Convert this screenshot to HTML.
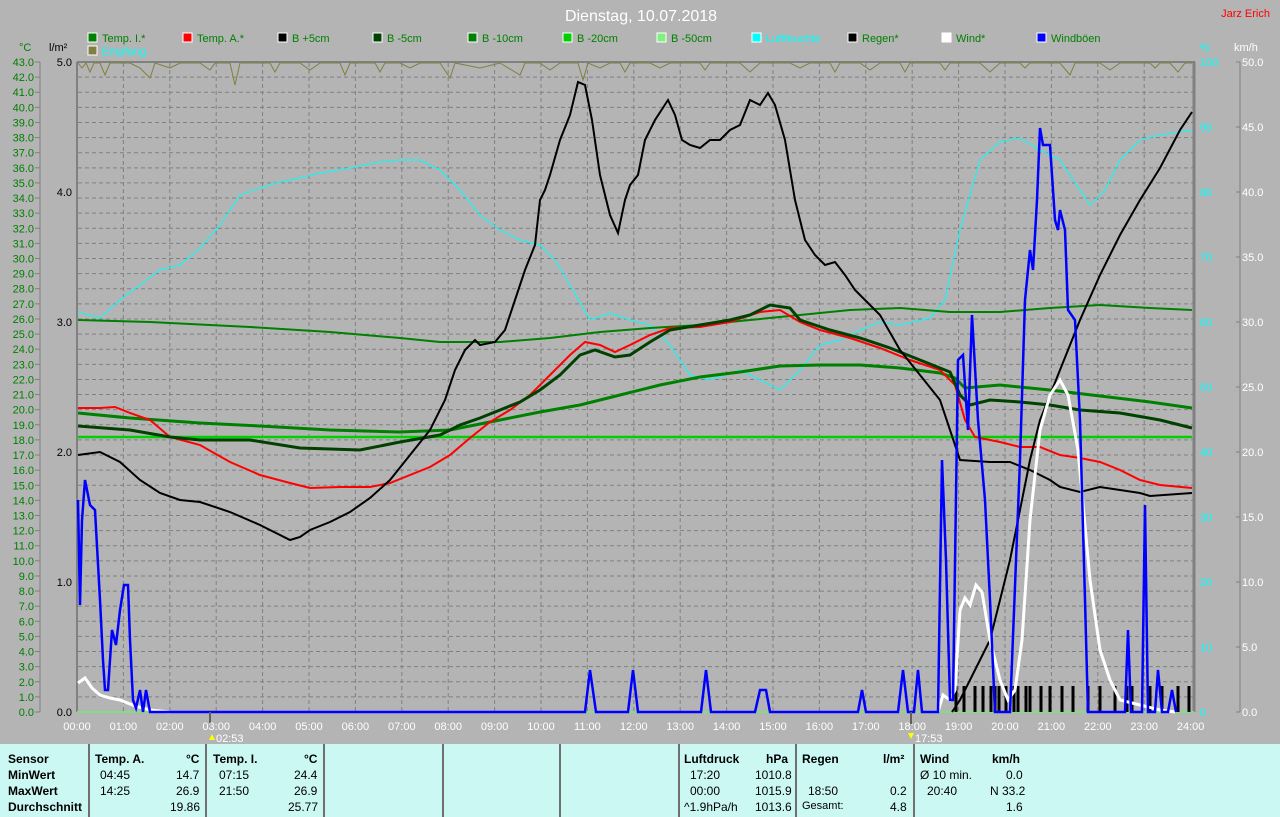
<!DOCTYPE html>
<html><head><meta charset="utf-8"><style>
body{margin:0;width:1280px;height:817px;overflow:hidden;background:#b4b4b4;font-family:"Liberation Sans",sans-serif}
svg{position:absolute;left:0;top:0}
.tb{position:absolute;left:0;top:744px;width:1280px;height:73px;background:#ccf8f4}
.c{position:absolute;font-size:12px;color:#000}
.b{font-weight:bold}
.v{position:absolute;top:0;width:2px;height:73px;background:#707070}
</style></head><body>
<svg width="1280" height="744" viewBox="0 0 1280 744" font-family="Liberation Sans, sans-serif">
<text x="641" y="21" fill="#fff" font-size="16" text-anchor="middle">Dienstag, 10.07.2018</text>
<text x="1270" y="17" fill="#f00" font-size="11" text-anchor="end">Jarz Erich</text>
<g font-size="11">
<rect x="88" y="33" width="9" height="9" fill="#008000" stroke="#fff"/><text x="102" y="42" fill="#008000">Temp. I.*</text>
<rect x="183" y="33" width="9" height="9" fill="#f00" stroke="#fff"/><text x="197" y="42" fill="#008000">Temp. A.*</text>
<rect x="278" y="33" width="9" height="9" fill="#000" stroke="#fff"/><text x="292" y="42" fill="#008000">B +5cm</text>
<rect x="373" y="33" width="9" height="9" fill="#004000" stroke="#fff"/><text x="387" y="42" fill="#008000">B -5cm</text>
<rect x="468" y="33" width="9" height="9" fill="#008000" stroke="#fff"/><text x="482" y="42" fill="#008000">B -10cm</text>
<rect x="563" y="33" width="9" height="9" fill="#00d000" stroke="#fff"/><text x="577" y="42" fill="#008000">B -20cm</text>
<rect x="657" y="33" width="9" height="9" fill="#80f080" stroke="#fff"/><text x="671" y="42" fill="#008000">B -50cm</text>
<rect x="752" y="33" width="9" height="9" fill="#00ffff" stroke="#fff"/><text x="766" y="42" fill="#00ffff">Luftfeuchte</text>
<rect x="848" y="33" width="9" height="9" fill="#000" stroke="#fff"/><text x="862" y="42" fill="#008000">Regen*</text>
<rect x="942" y="33" width="9" height="9" fill="#fff" stroke="#fff"/><text x="956" y="42" fill="#008000">Wind*</text>
<rect x="1037" y="33" width="9" height="9" fill="#0000ff" stroke="#fff"/><text x="1051" y="42" fill="#008000">Windböen</text>
<rect x="88" y="46" width="9" height="9" fill="#808040" stroke="#fff"/><text x="102" y="55" fill="#00ffff">Empfang</text>
<text x="19" y="51" fill="#008000">°C</text>
<text x="49" y="51" fill="#000">l/m²</text>
<text x="1200" y="51" fill="#00ffff">%</text>
<text x="1234" y="51" fill="#fff">km/h</text>
</g>
<g stroke="#808080" stroke-dasharray="4,3" stroke-width="1" id="grid"></g>
<line x1="77" y1="62" x2="1195" y2="62" stroke="#808080" stroke-width="2"/>
<line x1="77" y1="62" x2="77" y2="712" stroke="#808080" stroke-width="2"/>
<line x1="1194" y1="62" x2="1194" y2="712" stroke="#808080" stroke-width="3"/>
<line x1="40" y1="62" x2="40" y2="712" stroke="#808080"/>
<line x1="1240" y1="62" x2="1240" y2="712" stroke="#808080"/>
<g id="axes" font-size="11"></g>
<polyline fill="none" stroke="#808040" stroke-width="1" points="78,63 82,68 86,63 90,72 94,63 100,63 105,75 110,63 130,63 140,68 150,78 155,63 170,68 180,63 200,63 210,70 215,63 230,63 235,85 240,63 270,63 275,72 280,63 300,63 310,70 320,63 340,63 345,75 350,63 375,63 380,72 385,63 400,63 410,68 420,63 440,63 450,78 455,63 480,68 500,63 520,75 525,63 540,63 550,70 560,63 578,63 583,80 588,63 600,68 610,63 620,63 625,72 630,63 650,63 660,68 670,63 700,63 705,70 710,63 740,63 750,72 760,63 790,63 800,68 810,63 830,63 835,72 840,63 860,63 870,70 880,63 900,63 905,72 910,63 940,63 945,70 950,63 980,63 990,72 1000,63 1020,63 1025,68 1030,63 1060,63 1070,75 1075,63 1100,63 1110,70 1120,63 1150,63 1155,68 1160,63 1170,63 1178,72 1185,63 1192,63"/>
<line x1="77" y1="712" x2="1194" y2="712" stroke="#80e080" stroke-width="2"/>
<polyline fill="none" stroke="#00ffff" stroke-width="1" points="78,312 100,318 120,300 140,285 160,270 180,265 200,248 220,225 240,195 260,188 280,182 300,178 320,173 350,168 380,162 400,160 420,160 440,170 460,190 480,215 500,230 520,240 540,245 555,260 570,285 590,320 610,313 630,320 650,325 670,345 690,375 710,380 740,370 760,380 780,390 800,370 820,345 840,340 860,330 880,322 900,325 930,318 945,300 960,230 980,160 1000,142 1020,138 1040,150 1060,160 1080,190 1090,205 1105,190 1120,160 1140,140 1160,135 1192,130"/>
<line x1="78" y1="437" x2="1192" y2="437" stroke="#00d000" stroke-width="2.5"/>
<polyline fill="none" stroke="#008000" stroke-width="2" points="78,320 150,322 250,327 330,332 400,338 440,342 500,342 550,338 600,332 650,328 700,325 750,320 800,315 850,310 900,308 950,312 1000,312 1050,308 1100,305 1150,308 1192,310"/>
<polyline fill="none" stroke="#008000" stroke-width="3" points="78,413 130,418 200,423 260,426 330,430 400,432 450,430 500,420 540,412 580,405 620,395 660,385 700,377 740,372 780,366 820,365 860,365 900,368 940,373 955,378 965,388 1000,385 1050,390 1100,396 1150,402 1192,408"/>
<polyline fill="none" stroke="#f00" stroke-width="2" points="78,408 100,408 115,407 130,413 150,420 170,437 200,445 230,462 260,475 290,483 310,488 340,487 370,487 390,483 410,475 430,467 450,455 470,438 490,422 510,410 530,395 550,375 570,355 585,342 600,345 615,352 630,345 650,335 670,328 700,327 730,322 760,312 780,310 800,322 820,330 850,338 880,348 910,360 940,370 955,385 965,420 975,437 1000,442 1020,447 1040,447 1060,455 1080,458 1100,462 1120,470 1140,480 1160,485 1192,488"/>
<polyline fill="none" stroke="#004000" stroke-width="3" points="78,426 130,430 170,437 200,440 250,440 300,448 360,450 400,442 440,435 460,425 480,418 500,410 520,402 540,390 560,375 580,355 595,350 615,357 630,355 650,342 670,330 700,325 730,320 750,315 770,305 790,308 800,320 830,330 860,338 890,348 920,360 950,372 960,395 970,405 990,400 1020,402 1050,405 1080,410 1120,413 1160,420 1192,428"/>
<polyline fill="none" stroke="#000" stroke-width="2" points="78,455 100,452 120,462 140,480 160,493 180,500 200,502 230,512 260,525 280,535 290,540 300,537 310,530 330,522 350,512 370,498 390,480 410,455 430,430 445,400 455,370 465,350 475,340 480,345 495,342 505,330 515,300 525,270 535,245 540,200 545,190 550,175 560,140 570,115 578,82 585,85 592,120 600,175 610,215 618,233 625,200 630,185 638,175 645,140 655,120 668,100 675,115 682,140 690,145 700,148 710,140 720,140 730,130 740,125 750,100 760,105 768,93 775,105 785,140 795,200 805,240 815,255 825,265 835,262 845,275 855,290 865,300 880,315 900,350 920,375 940,400 955,445 960,460 990,462 1010,462 1030,470 1050,480 1060,487 1080,492 1100,487 1120,490 1140,493 1150,496 1192,493"/>
<polyline fill="none" stroke="#000" stroke-width="2" points="952,712 960,700 975,670 990,640 1000,600 1010,560 1020,510 1030,460 1040,420 1050,395 1060,370 1080,320 1100,275 1120,235 1140,200 1160,168 1180,130 1192,112"/>
<g stroke="#000" stroke-width="3" id="rain"></g>
<polyline fill="none" stroke="#fff" stroke-width="3" points="78,683 85,678 92,688 100,695 110,698 120,700 135,706 150,710 170,712"/>
<polyline fill="none" stroke="#fff" stroke-width="3" points="938,712 943,695 950,700 955,690 960,610 965,598 970,605 976,585 982,592 990,640 1000,680 1008,700 1015,690 1022,640 1030,520 1040,430 1050,395 1060,380 1068,395 1078,450 1090,580 1100,650 1110,680 1120,700 1140,705 1160,710 1175,712"/>
<polyline fill="none" stroke="#0000ff" stroke-width="2.5" points="78,500 80,605 82,520 85,480 90,505 95,510 100,600 103,660 105,690 108,690 112,630 116,645 120,610 124,585 128,585 130,640 133,700 136,708 140,690 143,712 146,690 150,712 585,712 590,670 596,712 628,712 633,670 638,712 701,712 706,670 711,712 755,712 760,690 766,690 770,712 858,712 862,690 866,712 898,712 903,670 908,712 914,712 918,670 922,712 938,712 942,460 946,560 950,700 953,700 958,360 963,355 968,430 972,315 978,420 985,500 990,600 995,712 1010,712 1020,460 1025,300 1030,250 1033,270 1037,200 1040,128 1043,145 1050,145 1055,220 1058,230 1060,210 1065,230 1068,310 1075,320 1080,420 1085,600 1088,712 1125,712 1128,630 1131,712 1142,712 1145,505 1148,712 1155,712 1158,670 1162,712 1168,712 1172,690 1176,712"/>
<line x1="210" y1="712" x2="210" y2="724" stroke="#606060" stroke-width="2"/>
<line x1="911" y1="712" x2="911" y2="724" stroke="#606060" stroke-width="2"/>
<g font-size="11" fill="#fff" id="hours"></g>
<polygon points="212,734 215,740 209,740" fill="#ff0"/><text x="216" y="742" font-size="11" fill="#fff">02:53</text>
<polygon points="908,733 914,733 911,739" fill="#ff0"/><text x="915" y="742" font-size="11" fill="#fff">17:53</text>
</svg>
<div class="tb">
<div class="v" style="left:88px"></div><div class="v" style="left:205px"></div><div class="v" style="left:323px"></div><div class="v" style="left:442px"></div><div class="v" style="left:559px"></div><div class="v" style="left:678px"></div><div class="v" style="left:795px"></div><div class="v" style="left:913px"></div>
<div class="c b" style="left:8px;top:8px">Sensor</div><div class="c b" style="left:8px;top:24px">MinWert</div><div class="c b" style="left:8px;top:40px">MaxWert</div><div class="c b" style="left:8px;top:56px">Durchschnitt</div>
<div class="c b" style="left:95px;top:8px">Temp. A.</div><div class="c b" style="left:186px;top:8px">°C</div>
<div class="c" style="left:100px;top:24px">04:45</div><div class="c" style="left:176px;top:24px">14.7</div>
<div class="c" style="left:100px;top:40px">14:25</div><div class="c" style="left:176px;top:40px">26.9</div>
<div class="c" style="left:170px;top:56px">19.86</div>
<div class="c b" style="left:213px;top:8px">Temp. I.</div><div class="c b" style="left:304px;top:8px">°C</div>
<div class="c" style="left:219px;top:24px">07:15</div><div class="c" style="left:294px;top:24px">24.4</div>
<div class="c" style="left:219px;top:40px">21:50</div><div class="c" style="left:294px;top:40px">26.9</div>
<div class="c" style="left:288px;top:56px">25.77</div>
<div class="c b" style="left:684px;top:8px">Luftdruck</div><div class="c b" style="left:766px;top:8px">hPa</div>
<div class="c" style="left:690px;top:24px">17:20</div><div class="c" style="left:755px;top:24px">1010.8</div>
<div class="c" style="left:690px;top:40px">00:00</div><div class="c" style="left:755px;top:40px">1015.9</div>
<div class="c" style="left:684px;top:56px">^1.9hPa/h</div><div class="c" style="left:755px;top:56px">1013.6</div>
<div class="c b" style="left:802px;top:8px">Regen</div><div class="c b" style="left:883px;top:8px">l/m²</div>
<div class="c" style="left:808px;top:40px">18:50</div><div class="c" style="left:890px;top:40px">0.2</div>
<div class="c" style="left:802px;top:56px;font-size:11px">Gesamt:</div><div class="c" style="left:890px;top:56px">4.8</div>
<div class="c b" style="left:920px;top:8px">Wind</div><div class="c b" style="left:992px;top:8px">km/h</div>
<div class="c" style="left:920px;top:24px">Ø 10 min.</div><div class="c" style="left:1006px;top:24px">0.0</div>
<div class="c" style="left:927px;top:40px">20:40</div><div class="c" style="left:990px;top:40px">N 33.2</div>
<div class="c" style="left:1006px;top:56px">1.6</div>
</div>
<script>
var ns="http://www.w3.org/2000/svg";
function el(p,t,a,txt){var e=document.createElementNS(ns,t);for(var k in a)e.setAttribute(k,a[k]);if(txt!==undefined)e.textContent=txt;document.getElementById(p).appendChild(e);}
for(var i=1;i<43;i++){var y=712-i*650/43;el("grid","line",{x1:78,x2:1193,y1:y,y2:y});}
for(var h=1;h<24;h++){var x=77+h*46.4;el("grid","line",{x1:x,x2:x,y1:63,y2:712});}
for(var i=0;i<=43;i++){var y=712-i*650/43;el("axes","text",{x:34,y:y+4,fill:"#008000","text-anchor":"end"},i.toFixed(1));el("axes","line",{x1:35,x2:40,y1:y,y2:y,stroke:"#808080"});}
for(var i=0;i<=5;i++){var y=712-i*130;el("axes","text",{x:72,y:y+4,fill:"#000","text-anchor":"end"},i.toFixed(1));}
for(var i=0;i<=10;i++){var y=712-i*65;el("axes","text",{x:1200,y:y+4,fill:"#00ffff"},String(i*10));el("axes","text",{x:1242,y:y+4,fill:"#fff"},(i*5).toFixed(1));el("axes","line",{x1:1236,x2:1240,y1:y,y2:y,stroke:"#808080"});}
for(var h=0;h<=24;h++){var x=77+h*46.4;el("hours","text",{x:x,y:730,"text-anchor":"middle"},(h<10?"0":"")+h+":00");}
[956,964,975,983,991,995,999,1006,1014,1018,1026,1030,1041,1050,1062,1073,1088,1100,1115,1127,1132,1150,1162,1178,1189].forEach(function(x){el("rain","line",{x1:x,x2:x,y1:686,y2:712});});
</script>
</body></html>
